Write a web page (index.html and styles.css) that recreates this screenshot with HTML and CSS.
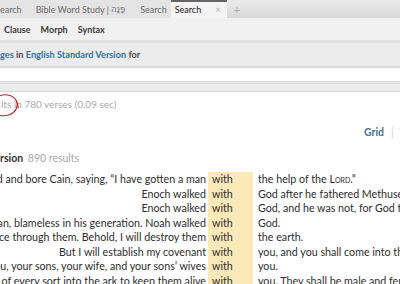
FILE: index.html
```html
<!DOCTYPE html>
<html>
<head>
<meta charset="utf-8">
<link rel="stylesheet" href="styles.css">
</head>
<body>
<div class="app">
  <div class="tabbar">
    <div class="tab tab-first">earch</div>
    <div class="tab tab-bws">Bible Word Study | <span class="heb">פָּנָה</span></div>
    <div class="tab tab-search">Search</div>
    <div class="tab tab-active">Search <span class="close">×</span></div>
    <div class="tab-add">+</div>
  </div>
  <div class="toolbar">
    <span class="tool">Clause</span>
    <span class="tool">Morph</span>
    <span class="tool">Syntax</span>
  </div>
  <div class="searchbar"><span class="link">ges</span> in <span class="link">English Standard Version</span> for</div>
  <div class="input"></div>
  <div class="band"></div>
  <div class="summary">
    lts in 780 verses (0.09 sec)
    <svg class="mark" width="24" height="26" viewBox="0 0 24 26">
      <path d="M0 2.5 C7 0.5 14 2.5 16.5 8 C18.5 13 16 19 10 21.5 C6 23 3 23 0 22.5" fill="none" stroke="#c0222a" stroke-width="1.1" stroke-linecap="round"/>
      <path d="M16.5 8 C17.5 10 18 12 18.4 15" fill="none" stroke="#c0222a" stroke-width="0.9" stroke-linecap="round"/>
    </svg>
  </div>
  <div class="viewrow">
    <span class="view">Grid</span><span class="sep">|</span><span class="view">V</span>
  </div>
  <div class="heading"><b>rsion</b> <span class="count">890 results</span></div>
  <div class="results">
    <div class="row"><div class="pre"><span>Now Adam knew Eve his wife, and she conceived and bore Cain, saying, “I have gotten a man</span></div><div class="hit">with</div><div class="post">the help of the <span class="sc">Lord</span>.”</div></div>
    <div class="row"><div class="pre"><span>Enoch walked</span></div><div class="hit">with</div><div class="post">God after he fathered Methuselah 300 years</div></div>
    <div class="row"><div class="pre"><span>Enoch walked</span></div><div class="hit">with</div><div class="post">God, and he was not, for God took him.</div></div>
    <div class="row"><div class="pre"><span>Noah was a righteous man, blameless in his generation. Noah walked</span></div><div class="hit">with</div><div class="post">God.</div></div>
    <div class="row"><div class="pre"><span>for the earth is filled with violence through them. Behold, I will destroy them</span></div><div class="hit">with</div><div class="post">the earth.</div></div>
    <div class="row"><div class="pre"><span>But I will establish my covenant</span></div><div class="hit">with</div><div class="post">you, and you shall come into the ark</div></div>
    <div class="row"><div class="pre"><span>the ark, you, your sons, your wife, and your sons’ wives</span></div><div class="hit">with</div><div class="post">you.</div></div>
    <div class="row"><div class="pre"><span>you shall bring two of every sort into the ark to keep them alive</span></div><div class="hit">with</div><div class="post">you. They shall be male and female.</div></div>
  </div>
</div>
</body>
</html>
```
FILE: styles.css
```css
html, body {
  margin: 0;
  padding: 0;
  background: #fff;
}
body {
  width: 400px;
  height: 284px;
  overflow: hidden;
  font-family: Lato, "Noto Sans", sans-serif;
}
.app {
  width: 400px;
}
.tabbar {
  display: flex;
  align-items: stretch;
  height: 18px;
  background: linear-gradient(#ebebeb, #d8d8d8);
  font-size: 9px;
  color: #6a6a6a;
}
.tab {
  display: flex;
  align-items: center;
  padding: 0 6px;
  background: #e4e4e4;
  white-space: nowrap;
}
.tab-first {
  padding-left: 0;
  padding-right: 8px;
}
.tab-bws {
  padding-right: 10px;
}
.tab-search {
  padding-left: 5px;
  padding-right: 4px;
}
.heb {
  font-family: "DejaVu Sans", sans-serif;
  font-size: 8.5px;
  margin-left: 2px;
}
.tab-active {
  background: #f4f4f4;
  color: #222;
  border-top: 2px solid #666;
  padding: 0 6px 2px 4px;
  width: 46px;
  justify-content: space-between;
}
.close {
  color: #b5b5b5;
  font-size: 9px;
}
.tab-add {
  display: flex;
  align-items: center;
  padding-left: 7px;
  color: #aaa;
  font-size: 11px;
}
.toolbar {
  display: flex;
  gap: 10px;
  height: 22px;
  align-items: center;
  padding: 0 4px;
  background: #f1f1f1;
  font-size: 9px;
  font-weight: bold;
  color: #3a3a3a;
}
.searchbar {
  display: flex;
  align-items: center;
  height: 23px;
  background: #ececec;
  border-top: 3px solid #e2e2e2;
  border-bottom: 2px solid #d9d9d9;
  font-size: 9.2px;
  font-weight: bold;
  color: #4a4a4a;
  white-space: pre;
}
.link {
  color: #3670a6;
}
.input {
  height: 13px;
  background: #fff;
}
.band {
  height: 7px;
  background: #ececec;
  border-top: 3px solid #e0e0e0;
  border-bottom: 1px solid #d6d6d6;
}
.summary {
  position: relative;
  height: 26px;
  padding: 6px 0 0 1px;
  box-sizing: border-box;
  font-size: 10px;
  color: #a9a9a9;
}
.mark {
  position: absolute;
  left: 0;
  top: 1px;
}
.viewrow {
  display: flex;
  justify-content: flex-end;
  align-items: center;
  gap: 6px;
  height: 24px;
  padding-top: 2px;
  margin-right: -7px;
  font-size: 10.5px;
  font-weight: bold;
  color: #4c6f95;
}
.view:first-child {
  margin-right: 1px;
}
.sep {
  color: #d0d0d0;
  font-weight: normal;
}
.heading {
  height: 26px;
  padding-top: 8px;
  box-sizing: border-box;
  font-size: 10.5px;
  color: #333;
}
.count {
  color: #a9a9a9;
  margin-left: 2px;
}
.results {
  margin-top: 2px;
}
.row {
  display: flex;
  height: 14.5px;
  font-size: 10.7px;
  line-height: 14.5px;
  color: #2e2e2e;
  white-space: nowrap;
}
.pre {
  width: 206px;
  flex: none;
  display: flex;
  justify-content: flex-end;
  overflow: hidden;
  padding-right: 2px;
}
.pre span {
  flex: none;
}
.hit {
  width: 41px;
  flex: none;
  padding-left: 4px;
  background: #fce9ba;
}
.post {
  padding-left: 5px;
  overflow: hidden;
}
.sc {
  font-variant: small-caps;
}
```
